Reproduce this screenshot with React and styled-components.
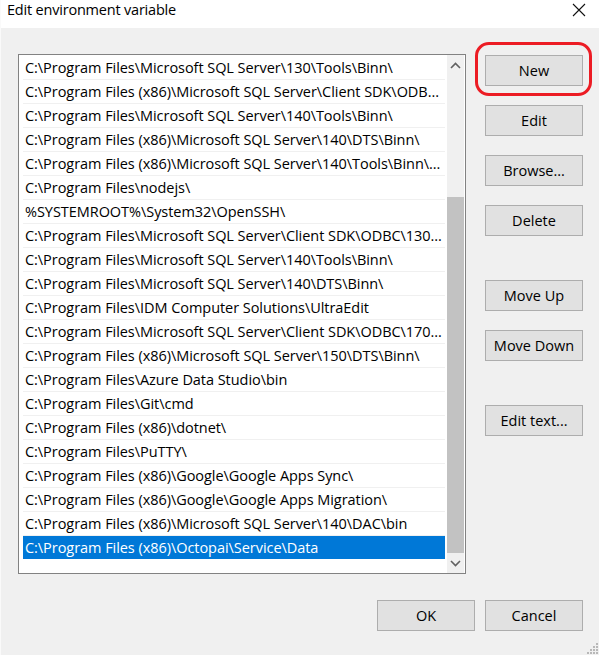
import styled, { createGlobalStyle } from 'styled-components'

const GlobalStyle = createGlobalStyle`
    html, body {
        margin: 0;
        padding: 0;
        background: #f0f0f0;
    }
    body {
        font-family: "Open Sans", "Noto Sans", sans-serif;
        color: #000;
    }
`

const paths = [
    'C:\\Program Files\\Microsoft SQL Server\\130\\Tools\\Binn\\',
    'C:\\Program Files (x86)\\Microsoft SQL Server\\Client SDK\\ODB...',
    'C:\\Program Files\\Microsoft SQL Server\\140\\Tools\\Binn\\',
    'C:\\Program Files (x86)\\Microsoft SQL Server\\140\\DTS\\Binn\\',
    'C:\\Program Files (x86)\\Microsoft SQL Server\\140\\Tools\\Binn\\...',
    'C:\\Program Files\\nodejs\\',
    '%SYSTEMROOT%\\System32\\OpenSSH\\',
    'C:\\Program Files\\Microsoft SQL Server\\Client SDK\\ODBC\\130...',
    'C:\\Program Files\\Microsoft SQL Server\\140\\Tools\\Binn\\',
    'C:\\Program Files\\Microsoft SQL Server\\140\\DTS\\Binn\\',
    'C:\\Program Files\\IDM Computer Solutions\\UltraEdit',
    'C:\\Program Files\\Microsoft SQL Server\\Client SDK\\ODBC\\170...',
    'C:\\Program Files (x86)\\Microsoft SQL Server\\150\\DTS\\Binn\\',
    'C:\\Program Files\\Azure Data Studio\\bin',
    'C:\\Program Files\\Git\\cmd',
    'C:\\Program Files (x86)\\dotnet\\',
    'C:\\Program Files\\PuTTY\\',
    'C:\\Program Files (x86)\\Google\\Google Apps Sync\\',
    'C:\\Program Files (x86)\\Google\\Google Apps Migration\\',
    'C:\\Program Files (x86)\\Microsoft SQL Server\\140\\DAC\\bin',
    'C:\\Program Files (x86)\\Octopai\\Service\\Data',
]

// side buttons, gap = space above each one
const sideButtons = [
    { label: 'New', gap: 0, marked: true },
    { label: 'Edit', gap: 19 },
    { label: 'Browse...', gap: 19 },
    { label: 'Delete', gap: 19 },
    { label: 'Move Up', gap: 44 },
    { label: 'Move Down', gap: 19 },
    { label: 'Edit text...', gap: 44 },
]

const Chevron = ({ down }) => (
    <svg width="11" height="7" viewBox="0 0 11 7">
        <path
            d={down ? 'M1 1 L5.5 5.5 L10 1' : 'M1 6 L5.5 1.5 L10 6'}
            fill="none"
            stroke="#606060"
            strokeWidth="1.6"
        />
    </svg>
)

const CloseIcon = () => (
    <svg width="14" height="14" viewBox="0 0 14 14">
        <path d="M1 1 L13 13 M13 1 L1 13" stroke="#111" strokeWidth="1.1" fill="none" />
    </svg>
)

const Grip = () => (
    <svg width="12" height="12" viewBox="0 0 12 12">
        {[[9, 0], [9, 3], [6, 3], [9, 6], [6, 6], [3, 6], [9, 9], [6, 9], [3, 9], [0, 9]].map(([x, y]) => (
            <rect key={`${x}-${y}`} x={x} y={y} width="2" height="2" fill="#b8b8b8" />
        ))}
    </svg>
)

const App = () => {
    return (
        <>
            <GlobalStyle />
            <Window>
                <TitleBar>
                    <Title>Edit environment variable</Title>
                    <CloseButton><CloseIcon /></CloseButton>
                </TitleBar>

                <Body>
                    <ListBox>
                        <Rows>
                            {paths.map((p, i) => (
                                <Row key={i} selected={i === paths.length - 1}>
                                    {p}
                                </Row>
                            ))}
                        </Rows>
                        <ScrollBar>
                            <Arrow><Chevron /></Arrow>
                            <Track>
                                <Thumb />
                            </Track>
                            <Arrow><Chevron down /></Arrow>
                        </ScrollBar>
                    </ListBox>

                    <SideColumn>
                        {sideButtons.map((b) => (
                            <ButtonSlot key={b.label} gap={b.gap}>
                                <Button>{b.label}</Button>
                                {b.marked && <Marker />}
                            </ButtonSlot>
                        ))}
                    </SideColumn>
                </Body>

                <Footer>
                    <Button>OK</Button>
                    <Button>Cancel</Button>
                </Footer>
                <GripCorner><Grip /></GripCorner>
            </Window>
        </>
    )
}

const Window = styled.div`
    position: relative;
    width: 599px;
    height: 655px;
    background: #f0f0f0;
    border-left: 1px solid #fafafa;
    box-sizing: border-box;
    overflow: hidden;
`

const TitleBar = styled.div`
    height: 28px;
    background: #fff;
    display: flex;
    align-items: center;
    justify-content: space-between;
    padding: 0 13px 0 7px;
    margin-left: -1px;
`

const Title = styled.div`
    font-size: 14.5px;
    color: #000;
    letter-spacing: -0.2px;
    margin-top: -9px;
`

const CloseButton = styled.div`
    display: flex;
    margin-top: -8px;
`

const Body = styled.div`
    display: flex;
    align-items: flex-start;
    padding: 26px 0 0 17px;
`

const ListBox = styled.div`
    width: 448px;
    height: 520px;
    border: 1px solid #828282;
    background: #fff;
    box-sizing: border-box;
    display: flex;
    padding: 0 1px 0 4px;
`

const Rows = styled.div`
    flex: 1;
    min-width: 0;
    padding-top: 1px;
`

const Row = styled.div`
    height: 23px;
    line-height: 23px;
    border-bottom: 1px solid ${(p) => (p.selected ? '#ffffff' : '#f0f0f0')};
    background: ${(p) => (p.selected ? '#0078d7' : 'transparent')};
    color: ${(p) => (p.selected ? '#fff' : '#000')};
    font-size: 14.5px;
    letter-spacing: -0.05px;
    padding-left: 2px;
    white-space: nowrap;
    overflow: hidden;
`

const ScrollBar = styled.div`
    width: 17px;
    margin-left: 2px;
    background: #f0f0f0;
    display: flex;
    flex-direction: column;
`

const Arrow = styled.div`
    height: 20px;
    display: flex;
    align-items: center;
    justify-content: center;
    flex-shrink: 0;
`

const Track = styled.div`
    flex: 1;
    display: flex;
    flex-direction: column;
    justify-content: flex-end;
`

const Thumb = styled.div`
    height: 356px;
    background: #c2c2c2;
`

const SideColumn = styled.div`
    display: flex;
    flex-direction: column;
    margin-left: 19px;
    padding-top: 1px;
`

const ButtonSlot = styled.div`
    position: relative;
    margin-top: ${(p) => p.gap}px;
`

const Button = styled.button`
    width: 98px;
    height: 31px;
    background: #e1e1e1;
    border: 1px solid #adadad;
    font-family: "Open Sans", "Noto Sans", sans-serif;
    font-size: 14.5px;
    letter-spacing: 0;
    color: #000;
    padding: 0;
    display: block;
`

const Marker = styled.div`
    position: absolute;
    left: -10px;
    top: -13px;
    width: 117px;
    height: 54px;
    border: 3.5px solid #ec1c24;
    border-radius: 14px;
    box-sizing: border-box;
    pointer-events: none;
`

const Footer = styled.div`
    display: flex;
    justify-content: flex-end;
    gap: 10px;
    padding: 26px 16px 0 0;
`

const GripCorner = styled.div`
    position: absolute;
    right: 0;
    bottom: 0;
    display: flex;
`

export default App
